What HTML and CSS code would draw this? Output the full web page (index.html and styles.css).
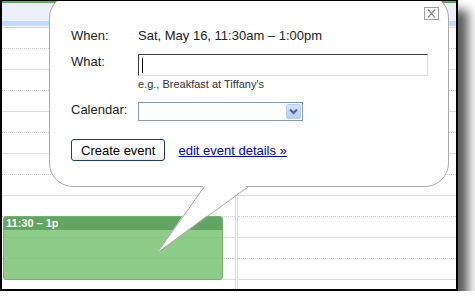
FILE: index.html
```html
<!DOCTYPE html>
<html>

<head>
    <title>Quick add event</title>
    <link rel="stylesheet" href="styles.css">
</head>

<body>
    <div class="shot">
        <div class="cal-head">
            <div class="green"></div>
            <div class="band"></div>
            <div class="blue"></div>
        </div>

        <div class="cal-body">
            <div class="day first">
                <div class="slot"></div><div class="slot hour"></div>
                <div class="slot"></div><div class="slot hour"></div>
                <div class="slot"></div><div class="slot hour"></div>
                <div class="slot"></div><div class="slot hour"></div>
                <div class="slot"></div><div class="slot hour"></div>
                <div class="slot"></div><div class="slot hour"></div>
                <div class="slot"></div>

                <div class="event">
                    <div class="event-time">11:30 – 1p</div>
                </div>
            </div>
            <div class="day">
                <div class="slot"></div><div class="slot hour"></div>
                <div class="slot"></div><div class="slot hour"></div>
                <div class="slot"></div><div class="slot hour"></div>
                <div class="slot"></div><div class="slot hour"></div>
                <div class="slot"></div><div class="slot hour"></div>
                <div class="slot"></div><div class="slot hour"></div>
                <div class="slot"></div>
            </div>
        </div>

        <div class="bubble">
            <button class="close" title="Close">
                <svg width="13" height="11" viewBox="0 0 13 11">
                    <path d="M3 1.5 L10 9.5 M10 1.5 L3 9.5" stroke="#8a8a8a" stroke-width="1.2" fill="none"/>
                </svg>
            </button>

            <div class="row">
                <span class="label">When:</span>
                <span class="value">Sat, May 16, 11:30am – 1:00pm</span>
            </div>

            <div class="row what">
                <label class="label" for="what">What:</label>
                <div class="field">
                    <div class="input" id="what"><span class="caret"></span></div>
                    <div class="hint">e.g., Breakfast at Tiffany's</div>
                </div>
            </div>

            <div class="row calendar">
                <span class="label">Calendar:</span>
                <div class="select">
                    <span class="select-btn">
                        <svg width="9" height="7" viewBox="0 0 9 7">
                            <path d="M1 1.5 L4.5 5 L8 1.5" stroke="#4d6185" stroke-width="2" fill="none"/>
                        </svg>
                    </span>
                </div>
            </div>

            <div class="actions">
                <button class="create">Create event</button>
                <a href="#" class="details">edit event details »</a>
            </div>
        </div>

        <!-- speech tail pointing at the new event -->
        <svg class="tail" width="454" height="288" viewBox="2 1 454 288">
            <polygon points="204,185 248,185 157,253" fill="#fff"/>
            <path d="M204.5 186.5 L157 253 L248.5 186.5" stroke="#aaa" stroke-width="1" fill="none"/>
        </svg>
    </div>
</body>

</html>
```

FILE: styles.css
```css
body {
    margin: 0;
    background: #fff;
    font-family: "Liberation Sans", Arial, sans-serif;
}

.shot {
    position: relative;
    width: 458px;
    height: 291px;
    box-sizing: border-box;
    border: 2px solid #000;
    border-top-width: 1px;
    background: #fff;
    overflow: hidden;
    box-shadow: 10px 10px 10px rgba(0, 0, 0, 0.65);
}

/* calendar behind the bubble */
.cal-head {
    border-bottom: 1px solid #d4d4d4;
}

.green {
    height: 2px;
    background: #52b152;
}

.band {
    height: 18px;
    background: #eef0f9;
}

.blue {
    height: 5px;
    margin-bottom: 1px;
    background: #c3d9ff;
}

.cal-body {
    display: flex;
}

.day {
    flex: 1;
}

.day.first {
    position: relative;
    flex: 0 0 233px;
    border-right: 1px solid #ddd;
    margin-right: 1px;
}

.day + .day {
    border-left: 1px solid #ddd;
}

.slot {
    height: 21px;
    box-sizing: border-box;
    border-bottom: 1px dotted #ccc;
}

.slot.hour {
    border-bottom: 1px solid #ddd;
}

.event {
    position: absolute;
    left: 1px;
    top: 188px;
    width: 220px;
    height: 64px;
    box-sizing: border-box;
    border: 1px solid #74b472;
    border-radius: 3px;
    background: rgba(112, 190, 108, 0.8);
    overflow: hidden;
}

.event-time {
    height: 13px;
    padding-left: 2px;
    background: #62a562;
    color: #fff;
    font-size: 11px;
    font-weight: bold;
    line-height: 13px;
}

/* quick add bubble */
.bubble {
    position: absolute;
    left: 47px;
    top: -7px;
    width: 400px;
    height: 193px;
    box-sizing: border-box;
    padding: 33px 20px 0 21px;
    border: 1px solid #aaa;
    border-radius: 24px;
    background: #fff;
    font-size: 13px;
    color: #222;
}

.close {
    position: absolute;
    right: 9px;
    top: 12px;
    width: 15px;
    height: 13px;
    padding: 0;
    border: 1px solid #a0a0a0;
    background: #fff;
    display: flex;
    align-items: center;
    justify-content: center;
}

.row {
    display: flex;
    align-items: flex-start;
    line-height: 16px;
}

.label {
    width: 67px;
    flex-shrink: 0;
}

.row.what {
    margin-top: 10px;
}

.field {
    flex: 1;
}

.input {
    height: 22px;
    box-sizing: border-box;
    border: 1px solid #ddd;
    border-top-color: #404040;
    border-left-color: #404040;
    padding: 3px 0 0 3px;
}

.caret {
    display: block;
    width: 1px;
    height: 15px;
    background: #000;
}

.hint {
    margin-top: 1px;
    font-size: 11px;
    line-height: 14px;
    color: #333;
}

.row.calendar {
    margin-top: 11px;
}

.select {
    width: 165px;
    height: 19px;
    box-sizing: border-box;
    border: 1px solid #7f9db9;
    display: flex;
    justify-content: flex-end;
    padding: 1px;
}

.select-btn {
    width: 15px;
    height: 15px;
    box-sizing: border-box;
    border: 1px solid #b9cdf6;
    border-radius: 2px;
    background: linear-gradient(#d6e2fd, #b6cbf8);
    display: flex;
    align-items: center;
    justify-content: center;
}

.actions {
    display: flex;
    align-items: center;
    margin-top: 18px;
}

.create {
    height: 22px;
    padding: 0 9px;
    border: 1px solid #1d3d6a;
    border-radius: 3px;
    background: linear-gradient(#fff 60%, #ecebe4);
    font-family: inherit;
    font-size: 13px;
    color: #000;
}

.details {
    margin-left: 13px;
    color: #00c;
    font-size: 13px;
}

.tail {
    position: absolute;
    left: 0;
    top: 0;
}
```
